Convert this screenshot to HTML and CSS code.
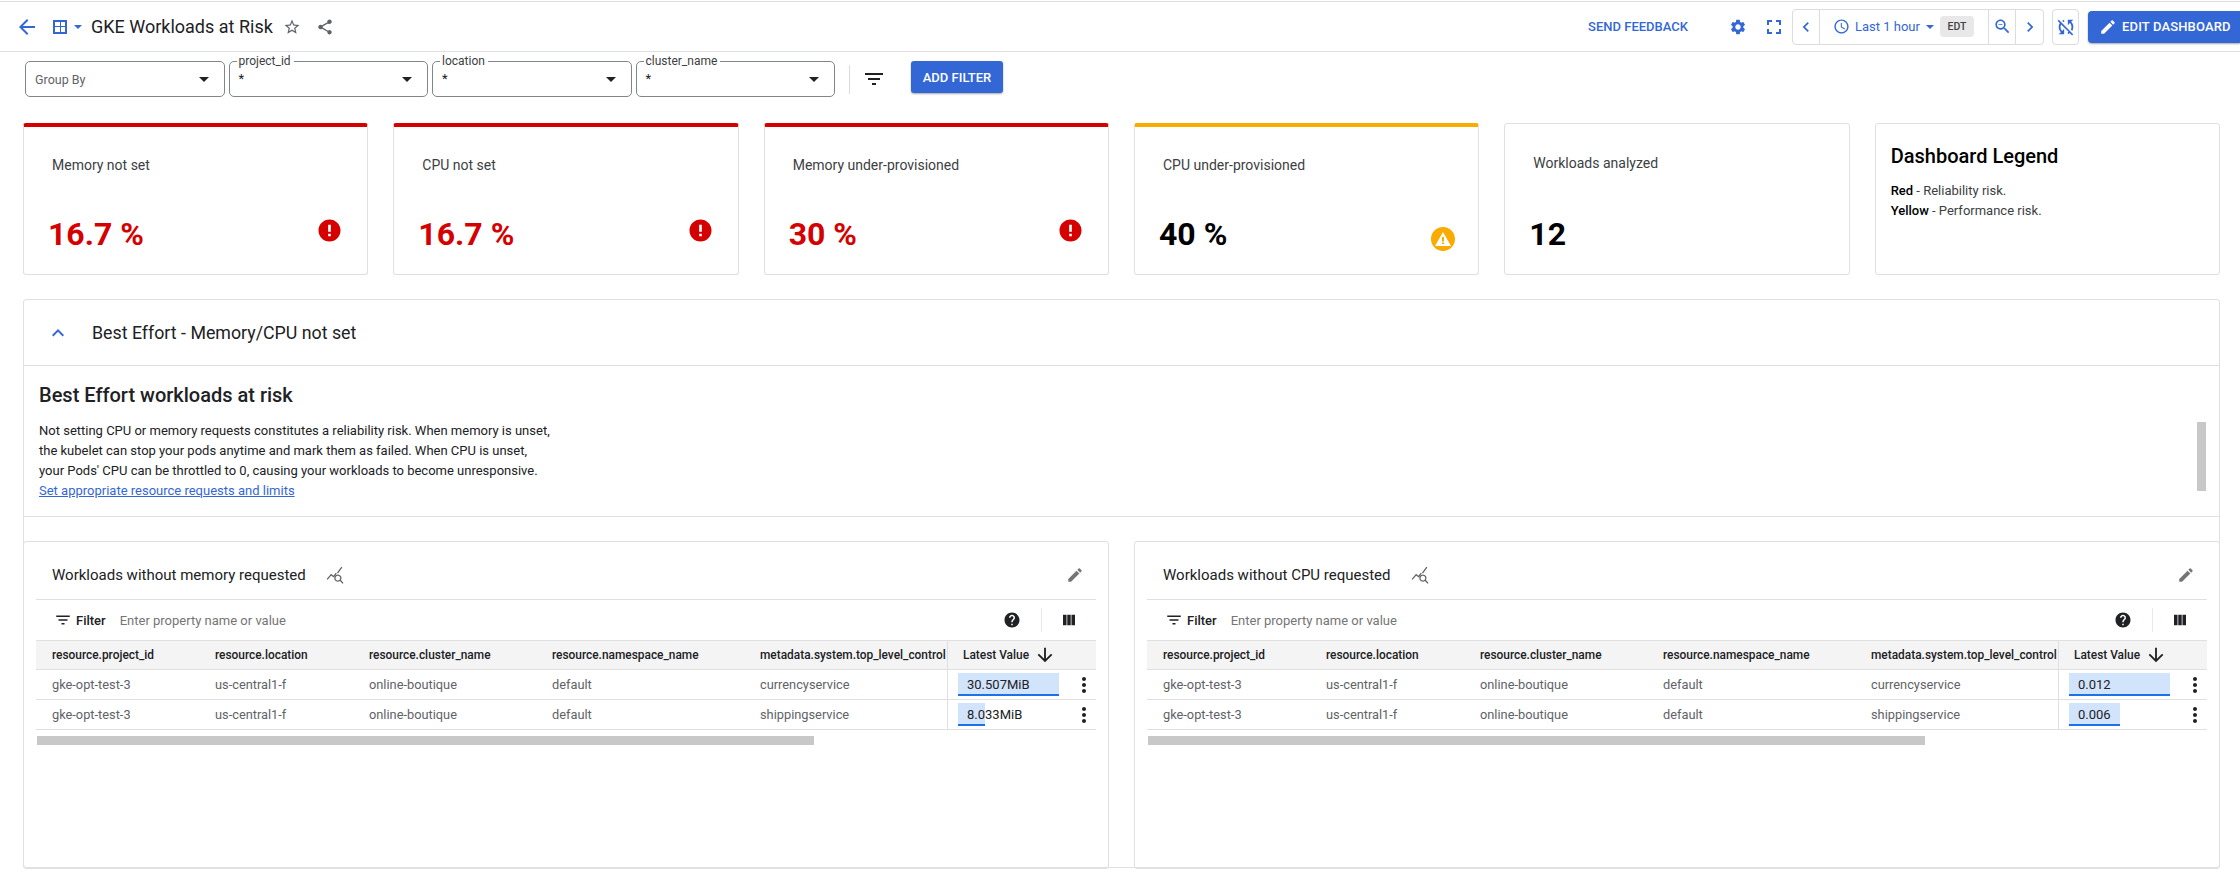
FILE: index.html
```html
<!DOCTYPE html>
<html lang="en">
<head>
<meta charset="utf-8">
<title>GKE Workloads at Risk</title>
<link rel="stylesheet" href="styles.css">
</head>
<body>
<svg class="defs" width="0" height="0" aria-hidden="true">
  <symbol id="i-back" viewBox="0 0 24 24"><path d="M20 11H7.83l5.59-5.59L12 4l-8 8 8 8 1.41-1.41L7.83 13H20v-2z"/></symbol>
  <symbol id="i-star" viewBox="0 0 24 24"><path d="M22 9.24l-7.19-.62L12 2 9.19 8.63 2 9.24l5.46 4.73L5.82 21 12 17.27 18.18 21l-1.63-7.03L22 9.24zM12 15.4l-3.76 2.27 1-4.28-3.32-2.88 4.38-.38L12 6.1l1.71 4.04 4.38.38-3.32 2.88 1 4.28L12 15.4z"/></symbol>
  <symbol id="i-share" viewBox="0 0 24 24"><path d="M18 16.08c-.76 0-1.44.3-1.96.77L8.91 12.7c.05-.23.09-.46.09-.7s-.04-.47-.09-.7l7.05-4.11c.54.5 1.25.81 2.04.81 1.66 0 3-1.34 3-3s-1.34-3-3-3-3 1.34-3 3c0 .24.04.47.09.7L8.04 9.81C7.5 9.31 6.79 9 6 9c-1.66 0-3 1.34-3 3s1.34 3 3 3c.79 0 1.5-.31 2.04-.81l7.12 4.16c-.05.21-.08.43-.08.65 0 1.61 1.31 2.92 2.92 2.92s2.92-1.31 2.92-2.92-1.31-2.92-2.92-2.92z"/></symbol>
  <symbol id="i-gear" viewBox="0 0 24 24"><path d="M19.14 12.94c.04-.3.06-.61.06-.94 0-.32-.02-.64-.07-.94l2.03-1.58c.18-.14.23-.41.12-.61l-1.92-3.32c-.12-.22-.37-.29-.59-.22l-2.39.96c-.5-.38-1.03-.7-1.62-.94l-.36-2.54c-.04-.24-.24-.41-.48-.41h-3.84c-.24 0-.43.17-.47.41l-.36 2.54c-.59.24-1.13.57-1.62.94l-2.39-.96c-.22-.08-.47 0-.59.22L2.74 8.87c-.12.21-.08.47.12.61l2.03 1.58c-.05.3-.09.63-.09.94s.02.64.07.94l-2.03 1.58c-.18.14-.23.41-.12.61l1.92 3.32c.12.22.37.29.59.22l2.39-.96c.5.38 1.03.7 1.62.94l.36 2.54c.05.24.24.41.48.41h3.84c.24 0 .44-.17.47-.41l.36-2.54c.59-.24 1.13-.56 1.62-.94l2.39.96c.22.08.47 0 .59-.22l1.92-3.32c.12-.22.07-.47-.12-.61l-2.01-1.58zM12 15.6c-1.98 0-3.6-1.62-3.6-3.6s1.62-3.6 3.6-3.6 3.6 1.62 3.6 3.6-1.62 3.6-3.6 3.6z"/></symbol>
  <symbol id="i-full" viewBox="0 0 24 24"><path d="M7 14H5v5h5v-2H7v-3zm-2-4h2V7h3V5H5v5zm12 7h-3v2h5v-5h-2v3zM14 5v2h3v3h2V5h-5z"/></symbol>
  <symbol id="i-left" viewBox="0 0 24 24"><path d="M15.41 7.41L14 6l-6 6 6 6 1.41-1.41L10.83 12z"/></symbol>
  <symbol id="i-right" viewBox="0 0 24 24"><path d="M10 6L8.59 7.41 13.17 12l-4.58 4.59L10 18l6-6z"/></symbol>
  <symbol id="i-clock" viewBox="0 0 24 24"><path d="M11.99 2C6.47 2 2 6.48 2 12s4.47 10 9.99 10C17.52 22 22 17.52 22 12S17.52 2 11.99 2zM12 20c-4.42 0-8-3.58-8-8s3.58-8 8-8 8 3.58 8 8-3.58 8-8 8zm.5-13H11v6l5.25 3.15.75-1.23-4.5-2.67z"/></symbol>
  <symbol id="i-zoomout" viewBox="0 0 24 24"><path d="M15.5 14h-.79l-.28-.27C15.41 12.59 16 11.11 16 9.5 16 5.91 13.09 3 9.5 3S3 5.91 3 9.5 5.91 16 9.5 16c1.61 0 3.09-.59 4.23-1.57l.27.28v.79l5 4.99L20.49 19l-4.99-5zm-6 0C7.01 14 5 11.99 5 9.5S7.01 5 9.5 5 14 7.01 14 9.5 11.99 14 9.5 14zM7 9h5v1H7z"/></symbol>
  <symbol id="i-nosync" viewBox="0 0 24 24"><path d="M10 6.35V4.26c-.8.21-1.55.54-2.23.96l1.46 1.46c.25-.12.5-.24.77-.33zm-7.14-.94l2.36 2.36C4.45 8.99 4 10.44 4 12c0 2.21.91 4.2 2.36 5.64L4 20h6v-6l-2.24 2.24C6.68 15.15 6 13.66 6 12c0-1 .25-1.94.68-2.77l8.08 8.08c-.25.13-.5.25-.77.34v2.09c.8-.21 1.55-.54 2.23-.96l2.36 2.36 1.27-1.27L4.14 4.14 2.86 5.41zM20 4h-6v6l2.24-2.24C17.32 8.85 18 10.34 18 12c0 1-.25 1.94-.68 2.77l1.46 1.46C19.55 15.01 20 13.56 20 12c0-2.21-.91-4.2-2.36-5.64L20 4z"/></symbol>
  <symbol id="i-pencil" viewBox="0 0 24 24"><path d="M3 17.25V21h3.75L17.81 9.94l-3.75-3.75L3 17.25zM20.71 7.04c.39-.39.39-1.02 0-1.41l-2.34-2.34c-.39-.39-1.02-.39-1.41 0l-1.83 1.83 3.75 3.75 1.83-1.83z"/></symbol>
  <symbol id="i-filter" viewBox="0 0 24 24"><path d="M10 18h4v-2h-4v2zM3 6v2h18V6H3zm3 7h12v-2H6v2z"/></symbol>
  <symbol id="i-help" viewBox="0 0 24 24"><path d="M12 2C6.48 2 2 6.48 2 12s4.48 10 10 10 10-4.48 10-10S17.52 2 12 2zm1 17h-2v-2h2v2zm2.07-7.75l-.9.92C13.45 12.9 13 13.5 13 15h-2v-.5c0-1.1.45-2.1 1.17-2.83l1.24-1.26c.37-.36.59-.86.59-1.41 0-1.1-.9-2-2-2s-2 .9-2 2H8c0-2.21 1.79-4 4-4s4 1.790 4 4c0 .88-.36 1.68-.93 2.25z"/></symbol>
  <symbol id="i-cols" viewBox="0 0 24 24"><path d="M3 4h5.300v16H3zM9.400 4h5.200v16H9.400zM15.700 4H21v16h-5.300z"/></symbol>
  <symbol id="i-down" viewBox="0 0 24 24"><path d="M20 12l-1.41-1.41L13 16.17V4h-2v12.17l-5.58-5.59L4 12l8 8 8-8z"/></symbol>
  <symbol id="i-error" viewBox="0 0 24 24"><path d="M12 .5C5.65.5.5 5.65.5 12S5.65 23.5 12 23.5 23.5 18.35 23.5 12 18.35.5 12 .5zm1.4 17.5h-2.8v-2.6h2.8V18zm0-4.6h-2.8V6h2.8v7.4z"/></symbol>
  <symbol id="i-warn" viewBox="0 0 24 24"><path fill-rule="evenodd" d="M12 0C5.37 0 0 5.37 0 12s5.37 12 12 12 12-5.37 12-12S18.630 0 12 0zM4 19L12 5l8 14H4zM11 10v4.500h2V10h-2zm0 5.500V17h2v-1.500h-2z"/></symbol>
  <symbol id="i-kebab" viewBox="0 0 24 24"><path d="M12 8c1.100 0 2-.9 2-2s-.9-2-2-2-2 .9-2 2 .9 2 2 2zm0 2c-1.100 0-2 .9-2 2s.9 2 2 2 2-.9 2-2-.9-2-2-2zm0 6c-1.100 0-2 .9-2 2s.9 2 2 2 2-.9 2-2-.9-2-2-2z"/></symbol>
  <symbol id="i-stats" viewBox="0 0 24 24"><path fill="none" stroke="currentColor" stroke-width="1.600" d="M1.500 17l5-6 3 2.500 3.500-4.500M14.500 9L20 1.500M15 11.500a3.800 3.800 0 1 0 .01 0M18 18l3.500 4"/></symbol>
</svg>

<header class="topbar">
  <div class="topbar-left">
    <svg class="icon back"><use href="#i-back"/></svg>
    <span class="dash-icon"><span class="dash-pane"></span><span class="dash-pane"></span><span class="dash-pane"></span><span class="dash-pane"></span></span>
    <span class="caret-blue caret-dash"></span>
    <h1 class="page-title">GKE Workloads at Risk</h1>
    <svg class="icon star"><use href="#i-star"/></svg>
    <svg class="icon share"><use href="#i-share"/></svg>
  </div>
  <div class="topbar-right">
    <span class="feedback">SEND FEEDBACK</span>
    <svg class="icon gear"><use href="#i-gear"/></svg>
    <svg class="icon fullscreen"><use href="#i-full"/></svg>
    <div class="time-group">
      <span class="time-cell nav-l"><svg class="icon chev"><use href="#i-left"/></svg></span>
      <span class="time-cell time-main">
        <svg class="icon clock"><use href="#i-clock"/></svg>
        <span class="time-label">Last 1 hour</span>
        <span class="caret-blue caret-time"></span>
        <span class="tz">EDT</span>
      </span>
      <span class="time-cell zoom-cell"><svg class="icon zoomout"><use href="#i-zoomout"/></svg></span>
      <span class="time-cell nav-r"><svg class="icon chev"><use href="#i-right"/></svg></span>
    </div>
    <span class="nosync"><svg class="icon nosync-i"><use href="#i-nosync"/></svg></span>
    <button class="edit-btn"><svg class="icon edit-i"><use href="#i-pencil"/></svg>EDIT DASHBOARD</button>
  </div>
</header>

<div class="filters">
  <div class="select select-plain"><span class="select-hint">Group By</span><span class="caret-dark"></span></div>
  <div class="select"><span class="float-label">project_id</span><span class="select-val">*</span><span class="caret-dark"></span></div>
  <div class="select"><span class="float-label">location</span><span class="select-val">*</span><span class="caret-dark"></span></div>
  <div class="select"><span class="float-label">cluster_name</span><span class="select-val">*</span><span class="caret-dark"></span></div>
  <span class="filter-sep"></span>
  <svg class="icon filter-main"><use href="#i-filter"/></svg>
  <button class="add-filter">ADD FILTER</button>
</div>

<section class="scorecards">
  <article class="card card-red">
    <div class="card-label">Memory not set</div>
    <div class="card-row"><span class="card-value red">16.7 %</span><svg class="icon status err"><use href="#i-error"/></svg></div>
  </article>
  <article class="card card-red">
    <div class="card-label">CPU not set</div>
    <div class="card-row"><span class="card-value red">16.7 %</span><svg class="icon status err"><use href="#i-error"/></svg></div>
  </article>
  <article class="card card-red">
    <div class="card-label">Memory under-provisioned</div>
    <div class="card-row"><span class="card-value red">30 %</span><svg class="icon status err"><use href="#i-error"/></svg></div>
  </article>
  <article class="card card-yellow">
    <div class="card-label">CPU under-provisioned</div>
    <div class="card-row"><span class="card-value">40 %</span><svg class="icon status warn"><use href="#i-warn"/></svg></div>
  </article>
  <article class="card card-plain">
    <div class="card-label">Workloads analyzed</div>
    <div class="card-row"><span class="card-value">12</span></div>
  </article>
  <article class="card card-legend">
    <h2 class="legend-title">Dashboard Legend</h2>
    <p class="legend-line"><b>Red</b> - Reliability risk.</p>
    <p class="legend-line"><b>Yellow</b> - Performance risk.</p>
  </article>
</section>

<section class="group">
  <div class="group-head">
    <svg class="icon group-chev" viewBox="0 0 24 24"><path d="M12 8l-6 6 1.410 1.410L12 10.830l4.590 4.580L18 14z"/></svg>
    <h2 class="group-title">Best Effort - Memory/CPU not set</h2>
  </div>
  <div class="note">
    <div class="note-body">
      <h3 class="note-title">Best Effort workloads at risk</h3>
      <p class="note-text">Not setting CPU or memory requests constitutes a reliability risk. When memory is unset,<br>the kubelet can stop your pods anytime and mark them as failed. When CPU is unset,<br>your Pods' CPU can be throttled to 0, causing your workloads to become unresponsive.<br><a class="note-link" href="#">Set appropriate resource requests and limits</a></p>
    </div>
    <div class="note-scroll"></div>
  </div>
  <div class="panels">
    <article class="panel">
      <div class="panel-head">
        <span class="panel-title">Workloads without memory requested</span>
        <svg class="icon stats"><use href="#i-stats"/></svg>
        <svg class="icon pencil"><use href="#i-pencil"/></svg>
      </div>
      <div class="table-tools">
        <svg class="icon tool-filter"><use href="#i-filter"/></svg>
        <span class="tool-label">Filter</span>
        <span class="tool-hint">Enter property name or value</span>
        <svg class="icon help"><use href="#i-help"/></svg>
        <span class="tool-sep"></span>
        <svg class="icon cols"><use href="#i-cols"/></svg>
      </div>
      <div class="trow thead">
        <span class="cell">resource.project_id</span><span class="cell">resource.location</span><span class="cell">resource.cluster_name</span><span class="cell">resource.namespace_name</span><span class="cell">metadata.system.top_level_control</span>
        <span class="cell last">Latest Value<svg class="icon sort"><use href="#i-down"/></svg></span>
      </div>
      <div class="trow">
        <span class="cell">gke-opt-test-3</span><span class="cell">us-central1-f</span><span class="cell">online-boutique</span><span class="cell">default</span><span class="cell">currencyservice</span>
        <span class="cell last val"><span class="bar-box"><span class="bar" style="width:100%"></span><span class="bar-text">30.507MiB</span></span><svg class="icon kebab"><use href="#i-kebab"/></svg></span>
      </div>
      <div class="trow">
        <span class="cell">gke-opt-test-3</span><span class="cell">us-central1-f</span><span class="cell">online-boutique</span><span class="cell">default</span><span class="cell">shippingservice</span>
        <span class="cell last val"><span class="bar-box"><span class="bar" style="width:26.4%"></span><span class="bar-text">8.033MiB</span></span><svg class="icon kebab"><use href="#i-kebab"/></svg></span>
      </div>
      <div class="hscroll"><span class="hthumb"></span></div>
    </article>
    <article class="panel">
      <div class="panel-head">
        <span class="panel-title">Workloads without CPU requested</span>
        <svg class="icon stats"><use href="#i-stats"/></svg>
        <svg class="icon pencil"><use href="#i-pencil"/></svg>
      </div>
      <div class="table-tools">
        <svg class="icon tool-filter"><use href="#i-filter"/></svg>
        <span class="tool-label">Filter</span>
        <span class="tool-hint">Enter property name or value</span>
        <svg class="icon help"><use href="#i-help"/></svg>
        <span class="tool-sep"></span>
        <svg class="icon cols"><use href="#i-cols"/></svg>
      </div>
      <div class="trow thead">
        <span class="cell">resource.project_id</span><span class="cell">resource.location</span><span class="cell">resource.cluster_name</span><span class="cell">resource.namespace_name</span><span class="cell">metadata.system.top_level_control</span>
        <span class="cell last">Latest Value<svg class="icon sort"><use href="#i-down"/></svg></span>
      </div>
      <div class="trow">
        <span class="cell">gke-opt-test-3</span><span class="cell">us-central1-f</span><span class="cell">online-boutique</span><span class="cell">default</span><span class="cell">currencyservice</span>
        <span class="cell last val"><span class="bar-box"><span class="bar" style="width:100%"></span><span class="bar-text">0.012</span></span><svg class="icon kebab"><use href="#i-kebab"/></svg></span>
      </div>
      <div class="trow">
        <span class="cell">gke-opt-test-3</span><span class="cell">us-central1-f</span><span class="cell">online-boutique</span><span class="cell">default</span><span class="cell">shippingservice</span>
        <span class="cell last val"><span class="bar-box"><span class="bar" style="width:50%"></span><span class="bar-text">0.006</span></span><svg class="icon kebab"><use href="#i-kebab"/></svg></span>
      </div>
      <div class="hscroll"><span class="hthumb"></span></div>
    </article>
  </div>
</section>
</body>
</html>
```

FILE: styles.css
```css
* { box-sizing: border-box; }
html, body { margin: 0; padding: 0; background: #fff; }
body { height: 888px; overflow: hidden; padding-top: 1px; font-family: Roboto, "Liberation Sans", sans-serif; color: #202124; }
.defs { position: absolute; }
.icon { display: block; flex: none; width: 24px; height: 24px; fill: currentColor; }
h1, h2, h3, p { margin: 0; font-weight: normal; }
button { font-family: inherit; border: 0; cursor: pointer; }

/* top bar */
.topbar { height: 51px; border-top: 1px solid #e0e0e0; border-bottom: 1px solid #e0e0e0; display: flex; justify-content: space-between; align-items: center; }
.topbar-left { display: flex; align-items: center; padding-left: 15px; }
.back { width: 24px; height: 24px; color: #3367d6; }
.dash-icon { margin-left: 14px; width: 14px; height: 14px; background: #3367d6; display: grid; grid-template-columns: 1fr 1fr; grid-template-rows: 1fr 1fr; gap: 1px; padding: 2px; }
.dash-pane { background: #fff; }
.caret-blue { width: 0; height: 0; border-left: 4px solid transparent; border-right: 4px solid transparent; border-top: 4px solid #3367d6; }
.caret-dash { margin-left: 7px; }
.page-title { margin-left: 9px; font-size: 18px; line-height: 24px; color: #202124; }
.star { width: 18px; height: 18px; margin-left: 10px; color: #5f6368; }
.share { width: 18px; height: 18px; margin-left: 15px; color: #5f6368; }
.topbar-right { display: flex; align-items: center; }
.feedback { font-size: 13px; font-weight: 500; color: #3367d6; margin-right: 41px; }
.gear { width: 18px; height: 18px; color: #3367d6; }
.fullscreen { width: 24px; height: 24px; margin-left: 15px; color: #3367d6; }
.time-group { margin-left: 6px; height: 36px; width: 252px; display: flex; align-items: center; border: 1px solid #dadce0; border-radius: 4px; color: #3367d6; }
.time-cell { height: 100%; display: flex; align-items: center; justify-content: center; border-right: 1px solid #dadce0; }
.nav-l { width: 27px; }
.time-main { width: 169px; justify-content: flex-start; padding-left: 13px; }
.zoom-cell { width: 27px; }
.nav-r { flex: 1; border-right: 0; }
.chev { width: 20px; height: 20px; }
.clock { width: 17px; height: 17px; }
.time-label { font-size: 13px; margin-left: 5px; }
.caret-time { margin-left: 6px; }
.tz { margin-left: 6px; width: 34px; height: 21px; line-height: 21px; text-align: center; background: #e8e8e8; border-radius: 4px; font-size: 10.500px; font-weight: 500; color: #444; }
.zoomout { width: 19px; height: 19px; }
.nosync { margin-left: 8px; width: 27px; height: 36px; display: flex; align-items: center; justify-content: center; border: 1px solid #dadce0; border-radius: 4px; color: #3367d6; }
.nosync-i { width: 22px; height: 22px; flex: none; }
.edit-btn { margin-left: 9px; width: 152px; height: 32px; display: flex; align-items: center; background: #3367d6; color: #fff; border-radius: 4px 0 0 4px; font-size: 13px; font-weight: 500; letter-spacing: .15px; padding: 0 0 0 11px; box-shadow: 0 1px 2px rgba(0,0,0,.35); }
.edit-i { width: 18px; height: 18px; margin-right: 5px; }

/* filter row */
.filters { height: 71px; padding: 9px 0 0 25px; display: flex; align-items: flex-start; }
.select { position: relative; width: 199.500px; height: 36px; margin-right: 4px; border: 1px solid #80868b; border-radius: 5px; display: flex; align-items: center; justify-content: space-between; padding: 0 15px 0 9px; font-size: 12px; color: #202124; }
.select-hint { color: #5f6368; font-size: 12.500px; margin-top: 1px; }
.select-val { font-size: 13px; margin-top: -1px; }
.float-label { position: absolute; left: 7px; top: -8px; background: #fff; padding: 0 3px 0 2px; font-size: 12px; line-height: 14px; color: #3c4043; }
.caret-dark { width: 0; height: 0; border-left: 5px solid transparent; border-right: 5px solid transparent; border-top: 5px solid #202124; }
.filter-sep { width: 1px; height: 29px; margin: 4px 0 0 10px; background: #dadce0; }
.filter-main { margin: 6px 0 0 12px; color: #202124; }
.add-filter { margin-left: 25px; width: 92px; height: 32px; background: #3367d6; color: #fff; border-radius: 3px; font-size: 13px; font-weight: 500; box-shadow: 0 1px 2px rgba(0,0,0,.35); }

/* scorecards */
.scorecards { margin: 0 20px 0 23px; display: grid; grid-template-columns: repeat(6, 1fr); column-gap: 25px; height: 152px; }
.card { position: relative; border: 1px solid #e0e0e0; border-radius: 3px; padding: 0 28px; display: flex; flex-direction: column; overflow: hidden; }
.card-red { border-top: 4px solid #d50000; }
.card-yellow { border-top: 4px solid #f9ab00; }
.card-label { margin-top: 28px; font-size: 14px; line-height: 20px; color: #3c4043; }
.card-plain .card-label { margin-top: 29px; }
.card-row { margin-top: 39px; display: flex; align-items: center; justify-content: space-between; margin-left: -4px; height: 40px; }
.card-plain .card-row { margin-top: 41px; }
.card-value { font-size: 32px; font-weight: 700; line-height: 40px; color: #000; }
.card-value.red { color: #d50000; }
.status { width: 23px; height: 23px; }
.err { color: #d50000; margin: -7px -2px 0 0; }
.warn { color: #f9ab00; width: 24px; height: 24px; margin: 9px -5px 0 0; }
.card-legend { padding: 0 15px; }
.legend-title { margin-top: 19px; font-size: 20px; line-height: 26px; font-weight: 500; color: #000; }
.legend-line { font-size: 13px; line-height: 20px; color: #3c4043; }
.legend-title + .legend-line { margin-top: 12px; }
.legend-line b { font-weight: 500; color: #000; }

/* grouped section */
.group { margin: 24px 20px 0 23px; height: 569px; border: 1px solid #e0e0e0; border-radius: 3px; }
.group-head { height: 66px; display: flex; align-items: center; border-bottom: 1px solid #e0e0e0; padding-left: 22px; }
.group-chev { width: 24px; height: 24px; color: #3367d6; }
.group-title { margin-left: 22px; font-size: 17.800px; line-height: 24px; color: #202124; }
.note { height: 151px; border-bottom: 1px solid #e0e0e0; display: flex; justify-content: space-between; padding: 16px 13px 0 15px; }
.note-title { font-size: 20px; line-height: 26px; font-weight: 500; color: #202124; }
.note-text { margin-top: 13px; font-size: 13px; line-height: 20px; color: #202124; }
.note-link { color: #3367d6; }
.note-scroll { width: 9px; height: 69px; margin-top: 40px; background: #c8c8c8; }
.panels { margin: 24px -1px 0; display: grid; grid-template-columns: 1fr 1fr; column-gap: 25px; height: 328px; }
.panel { border: 1px solid #e0e0e0; border-radius: 3px; padding: 0 12px; }
.panel-head { height: 58px; display: flex; align-items: center; border-bottom: 1px solid #e0e0e0; padding: 8px 12px 0 16px; }
.panel-title { font-size: 15px; line-height: 20px; color: #202124; }
.stats { width: 19px; height: 19px; margin: 2px 0 0 20px; color: #5f6368; }
.pencil { width: 18px; height: 18px; margin-left: auto; color: #757575; }
.table-tools { height: 40px; display: flex; align-items: center; padding: 0 19px 0 18px; }
.tool-filter { width: 18px; height: 18px; }
.tool-label { margin-left: 4px; font-size: 13px; font-weight: 500; color: #202124; }
.tool-hint { margin-left: 14px; font-size: 13px; color: #757575; }
.help { width: 18px; height: 18px; margin-left: auto; color: #202124; }
.tool-sep { width: 1px; height: 24px; margin: 0 19px 0 20px; background: #e8e8e8; }
.cols { width: 16px; height: 16px; color: #202124; }
.trow { display: grid; grid-template-columns: 164px 154px 183px 208px 202px 1fr; height: 30px; border-bottom: 1px solid #e0e0e0; font-size: 12.800px; color: #5f6368; }
.thead { height: 30px; background: #f4f4f4; border-top: 1px solid #e0e0e0; color: #202124; font-weight: 500; font-size: 11.900px; }
.cell { padding-left: 15px; display: flex; align-items: center; white-space: nowrap; overflow: hidden; }
.cell:first-child { padding-left: 16px; }
.last { border-left: 1px solid #e0e0e0; padding-left: 15px; }
.sort { width: 22px; height: 22px; margin-left: 5px; color: #202124; }
.val { padding-left: 10px; justify-content: space-between; padding-right: 0; }
.bar-box { position: relative; width: 101px; height: 23px; display: block; flex: none; }
.bar { position: absolute; left: 0; top: 0; bottom: 0; background: #d2e3fc; border-bottom: 2px solid #1a73e8; }
.bar-text { position: relative; display: block; padding-left: 9px; line-height: 23px; color: #202124; font-size: 13px; }
.kebab { width: 24px; height: 24px; color: #202124; }
.hscroll { margin-top: 6px; height: 9px; }
.hthumb { display: block; width: 777px; height: 9px; margin-left: 1px; background: #c8c8c8; }
```
